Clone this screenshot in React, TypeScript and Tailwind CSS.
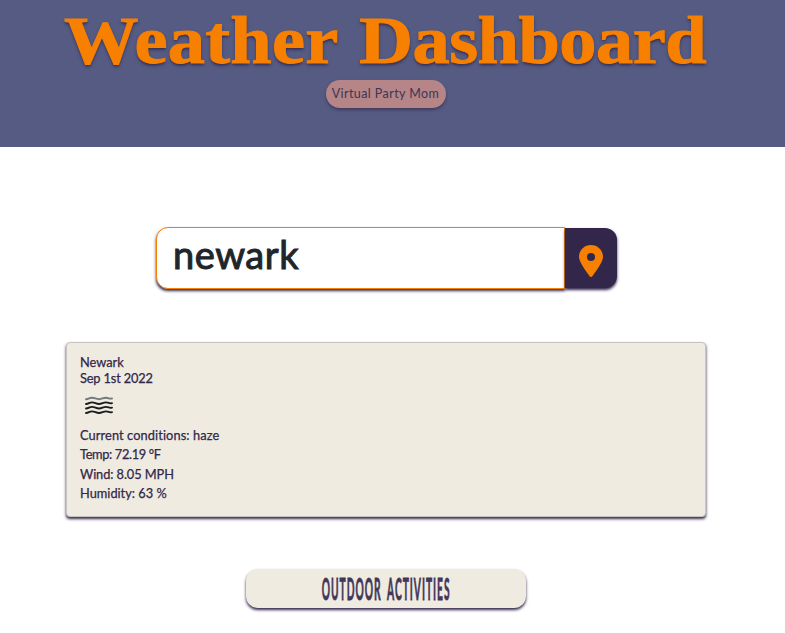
const details = [
  { text: "Current conditions: haze", style: "tracking-[0.1px]" },
  { text: "Temp: 72.19 °F", style: "tracking-[-0.35px]" },
  { text: "Wind: 8.05 MPH", style: "tracking-[-0.08px]" },
  { text: "Humidity: 63 %", style: "tracking-[0px]" },
];

function Header() {
  return (
    <header className="flex h-[147px] flex-col items-center bg-[#555b82] pr-[14px]">
      <h1 className="flex h-20 w-[642px] justify-center pt-[6px] font-['Liberation_Serif',serif] text-[67.5px] leading-[70px] font-bold whitespace-nowrap text-[#f88000] [text-shadow:0_2px_3px_#32274a]">
        <span className="scale-x-[1.103] [word-spacing:3px] [-webkit-text-stroke:1px_#f88000]">
          <span className="tracking-[0.2px]">Weather </span>
          <span className="tracking-[-0.5px]">Dashboard</span>
        </span>
      </h1>
      <div className="flex h-7 w-[120px] items-center justify-center rounded-full bg-[#b58587] pt-px text-[12.5px] tracking-[0.42px] whitespace-nowrap text-[#3b3654] shadow-[0_2px_3px_#32274a99]">
        <span>Virtual Party Mom</span>
      </div>
    </header>
  );
}

function SearchBar() {
  return (
    <form className="mt-20 ml-[156px] flex h-[62px] w-[461px]">
      <div className="flex w-[409px] items-center rounded-l-[12px] border border-[#f88000] bg-white pb-[7px] pl-[16px] text-[38px] tracking-[0.55px] text-[#212529] shadow-[0_2px_3px_#32274a] [-webkit-text-stroke:1px_#212529]">
        <span>newark</span>
      </div>
      <button type="button" aria-label="Search location" className="mt-px flex h-[60px] w-[52px] items-center justify-center rounded-r-[12px] bg-[#32274a] pt-[5px] shadow-[0_2px_3px_#32274a]">
        <svg width="24" height="32" viewBox="0 0 24 32" fill="#f88000">
          <path fillRule="evenodd" d="M12 0C5.3 0 0 5.2 0 11.8C0 17.2 7.4 26.8 10.6 31.2C11.3 32.2 12.7 32.2 13.4 31.2C16.6 26.8 24 17.2 24 11.8C24 5.2 18.7 0 12 0ZM12 8a4 4 0 1 1 0 8a4 4 0 0 1 0-8Z" />
        </svg>
      </button>
    </form>
  );
}

function HazeIcon() {
  return (
    <svg className="mt-[10px] ml-[5px]" width="28" height="20" viewBox="0 0 28 20" fill="none" strokeWidth="1.9" strokeLinecap="round" stroke="#191c1d">
      <path stroke="#77787a" d="M1 3.2C4 3.2 4 1.7 7 1.7S11 3.2 14 3.2S18 1.7 21 1.7S24 3.2 27 2.5" />
      <path d="M1 8C4 8 4 6.4 7 6.4S11 8 14 8S18 6.4 21 6.4S24 8 27 7.2" />
      <path d="M1 12.5C4 12.5 4 10.9 7 10.9S11 12.5 14 12.5S18 10.9 21 10.9S24 12.5 27 11.7" />
      <path d="M1 17C4 17 4 15.4 7 15.4S11 17 14 17S18 15.4 21 15.4S24 17 27 16.2" />
    </svg>
  );
}

function WeatherCard() {
  return (
    <section className="mt-[53px] ml-[66px] h-[175px] w-[640px] rounded-[4px] border border-[#c7c4bf] bg-[#efebe0] pt-[11px] pl-[13px] text-[12.8px] leading-4 text-[#32274a] shadow-[0_2px_3px_#32274a] [-webkit-text-stroke:0.25px_#32274a]">
      <h2>Newark</h2>
      <p className="tracking-[-0.15px]">Sep 1st 2022</p>
      <HazeIcon />
      <div className="mt-[10px]">
        {details.map((d) => (
          <p key={d.text} className="h-[19.3px] leading-[19px]">
            <span className={d.style}>{d.text}</span>
          </p>
        ))}
      </div>
    </section>
  );
}

export default function App() {
  return (
    <div className="h-[633px] overflow-hidden bg-white font-[Lato,sans-serif]">
      <Header />
      <SearchBar />
      <WeatherCard />
      <button type="button" className="mt-[52px] ml-[246px] flex h-[39px] w-[280px] items-center justify-center rounded-[12px] bg-[#efebe0] text-[31px] leading-none whitespace-nowrap text-[#423759] shadow-[0_2px_3px_#32274a]">
        <span className="scale-x-[0.33] font-bold tracking-[3px] [word-spacing:7px] [-webkit-text-stroke:0.8px_#423759]">OUTDOOR ACTIVITIES</span>
      </button>
    </div>
  );
}
